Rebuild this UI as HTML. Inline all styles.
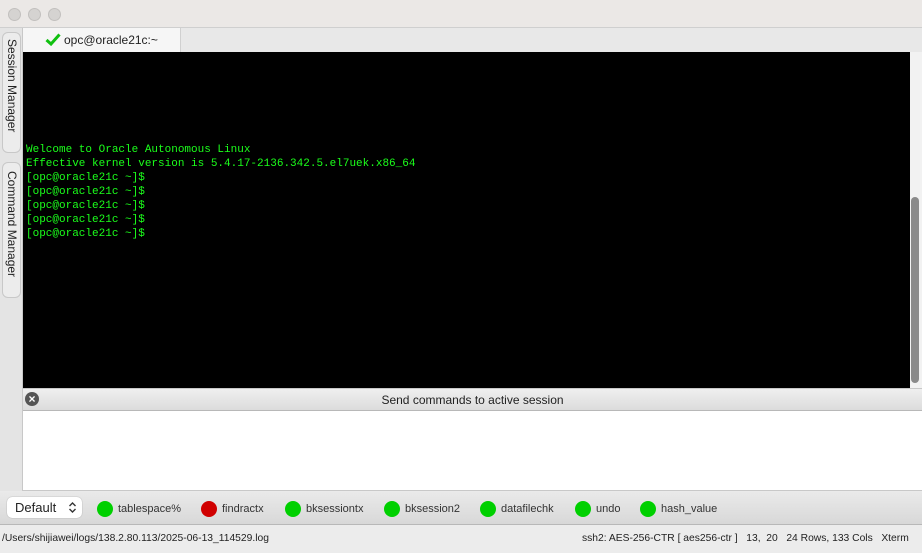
<!DOCTYPE html>
<html><head><style>
body{margin:0;width:922px;height:553px;overflow:hidden;background:#e6e6e6;font-family:"Liberation Sans",sans-serif;position:relative}
div{position:absolute;box-sizing:border-box}
.dot{width:13px;height:13px;border-radius:50%;background:#d5d3d1;border:1px solid #c2c0be;top:8px}
.term{font-family:"Liberation Mono",monospace;font-size:11px;color:#1bff1b;line-height:14px;white-space:pre}
.btn{top:500px;font-size:11px;color:#333;height:18px;line-height:18px;padding-left:21px}
.btn:before{content:"";position:absolute;left:0;top:1px;width:16px;height:16px;border-radius:50%;background:#00d000}
.btn.r:before{background:#d00000}
.vt{width:19px;left:2px;background:#ececec;border:1px solid #c8c8c8;border-radius:6px;font-size:12px;color:#222}
.vt span{position:absolute;left:2px;top:0;writing-mode:vertical-rl;white-space:nowrap}
</style></head><body>
<div style="left:0;top:0;width:922px;height:28px;background:#ebe8e6;border-bottom:1px solid #cfcfcf"></div>
<div class="dot" style="left:8px"></div><div class="dot" style="left:28px"></div><div class="dot" style="left:48px"></div>
<div style="left:0;top:28px;width:23px;height:497px;background:#e4e4e4;border-right:1px solid #c8c8c8"></div>
<div class="vt" style="top:32px;height:121px"><span style="top:6px">Session Manager</span></div>
<div class="vt" style="top:162px;height:136px"><span style="top:8px">Command Manager</span></div>
<div style="left:23px;top:28px;width:899px;height:24px;background:#e8e8e8"></div>
<div style="left:23px;top:28px;width:158px;height:24px;background:#f6f6f6;border-right:1px solid #d0d0d0;font-size:12px;color:#222;line-height:24px;padding-left:41px">opc@oracle21c:~</div>
<svg style="position:absolute;left:45px;top:33px" width="16" height="13" viewBox="0 0 16 13"><path d="M1.5 7 L6 11 L14.5 1.5" fill="none" stroke="#10c010" stroke-width="3"/></svg>
<div style="left:23px;top:52px;width:887px;height:336px;background:#000"></div>
<div style="left:910px;top:52px;width:12px;height:336px;background:#f2f2f2"></div>
<div style="left:911px;top:197px;width:8px;height:186px;background:#8a8a8a;border-radius:4px"></div>
<div class="term" style="left:26px;top:136px;top:136px;transform:translateY(7px)">Welcome to Oracle Autonomous Linux
Effective kernel version is 5.4.17-2136.342.5.el7uek.x86_64
[opc@oracle21c ~]$
[opc@oracle21c ~]$
[opc@oracle21c ~]$
[opc@oracle21c ~]$
[opc@oracle21c ~]$</div>
<div style="left:23px;top:388px;width:899px;height:23px;background:linear-gradient(#efefef,#dcdcdc);border-bottom:1px solid #b8b8b8;border-top:1px solid #c8c8c8;font-size:12px;color:#222;text-align:center;line-height:22px">Send commands to active session</div>
<div style="left:25px;top:392px;width:14px;height:14px;border-radius:50%;background:#555;color:#fff;font-size:12px;line-height:14px;text-align:center;font-weight:bold">×</div>
<div style="left:23px;top:411px;width:899px;height:80px;background:#fff;border-bottom:1px solid #c8c8c8"></div>
<div style="left:0;top:491px;width:922px;height:34px;background:linear-gradient(#eaeaea,#d8d8d8);border-bottom:1px solid #b8b8b8"></div>
<div style="left:7px;top:497px;width:75px;height:21px;background:#fff;border-radius:5px;box-shadow:0 0 1px #888;font-size:13px;color:#222;line-height:21px;padding-left:8px">Default</div>
<svg style="position:absolute;left:68px;top:501px" width="9" height="13"><path d="M1.5 5 L4.5 2 L7.5 5 M1.5 8 L4.5 11 L7.5 8" fill="none" stroke="#333" stroke-width="1.4"/></svg>
<div class="btn" style="left:97px">tablespace%</div>
<div class="btn r" style="left:201px">findractx</div>
<div class="btn" style="left:285px">bksessiontx</div>
<div class="btn" style="left:384px">bksession2</div>
<div class="btn" style="left:480px">datafilechk</div>
<div class="btn" style="left:575px">undo</div>
<div class="btn" style="left:640px">hash_value</div>
<div style="left:0;top:525px;width:922px;height:28px;background:#ececec;font-size:10.3px;color:#222;line-height:28px;padding-left:2px">/Users/shijiawei/logs/138.2.80.113/2025-06-13_114529.log</div>
<div style="left:582px;top:525px;height:28px;font-size:10.3px;color:#222;line-height:28px;white-space:pre">ssh2: AES-256-CTR [ aes256-ctr ]   13,  20   24 Rows, 133 Cols   Xterm</div>
</body></html>
